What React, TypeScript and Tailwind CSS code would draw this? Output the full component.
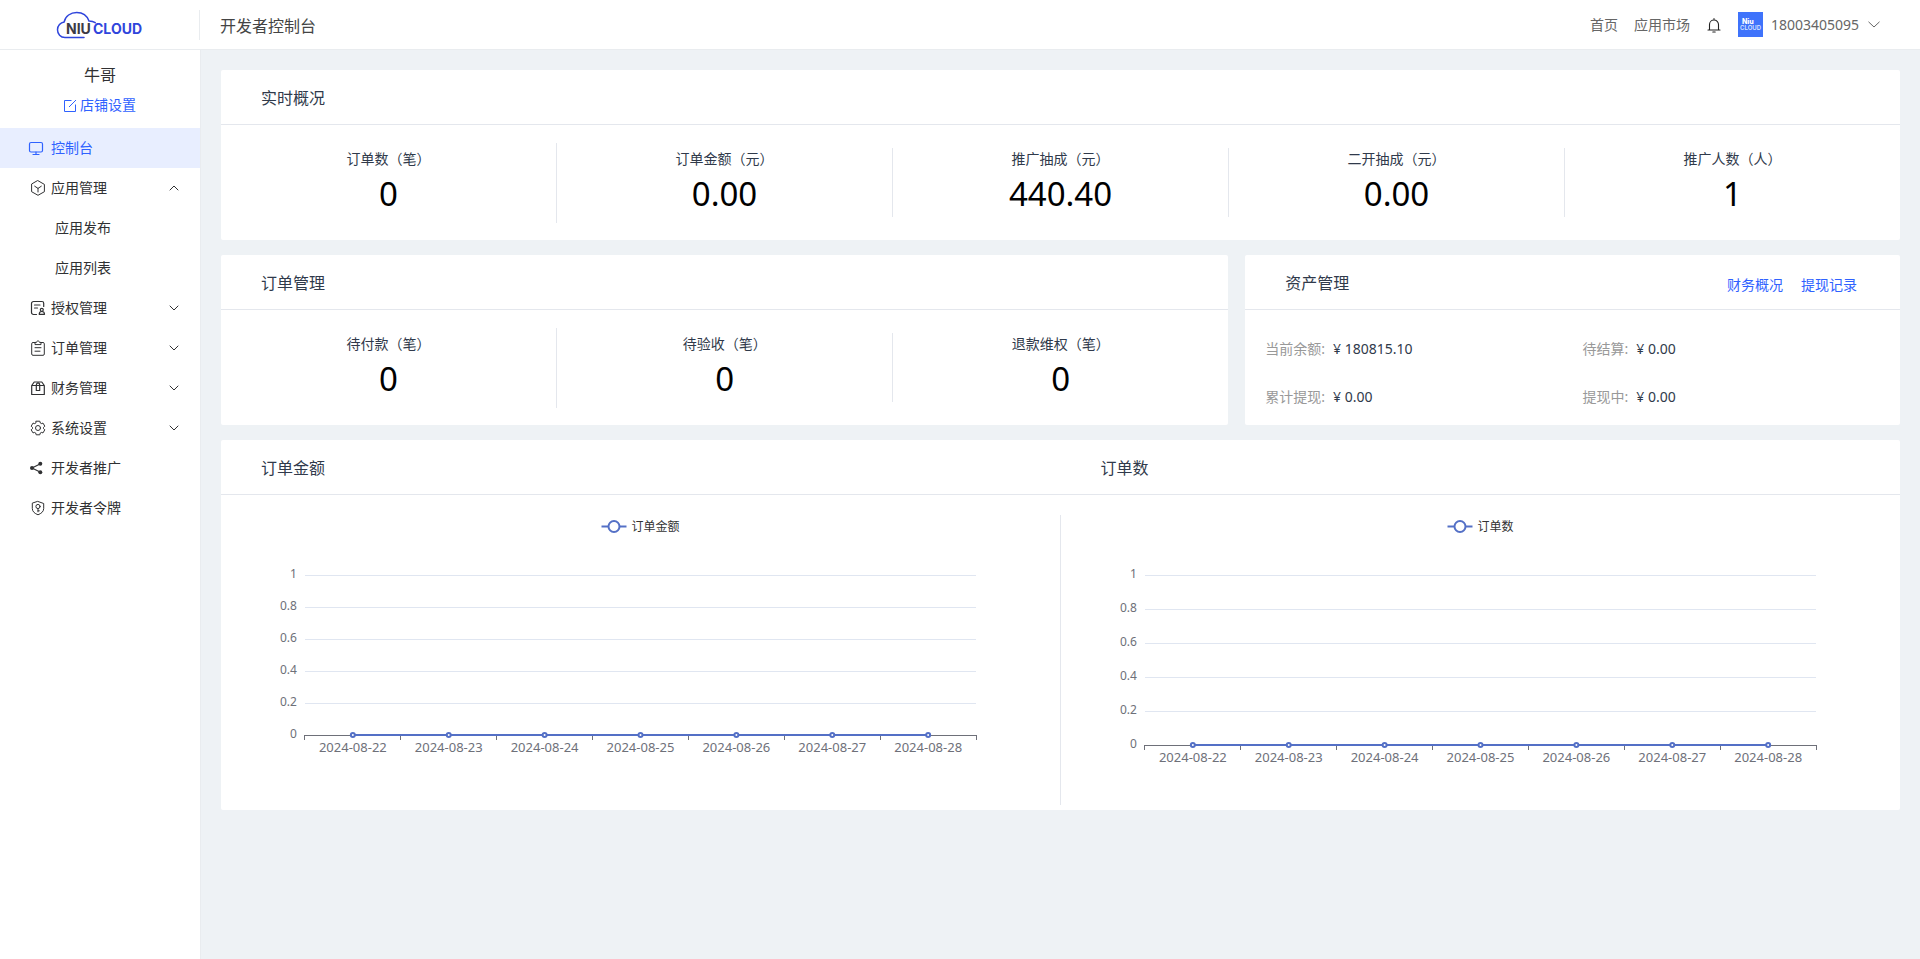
import { ReactNode, useState } from "react";
import { ChevronDown, ChevronUp } from "lucide-react";
import clsx from "clsx";

const BLUE = "#5470c6";
const days = ["2024-08-22", "2024-08-23", "2024-08-24", "2024-08-25", "2024-08-26", "2024-08-27", "2024-08-28"];
const yLabels = ["1", "0.8", "0.6", "0.4", "0.2", "0"];

function Icon({ children, className }: { children: ReactNode; className?: string }) {
  return (
    <svg viewBox="0 0 16 16" fill="none" stroke="currentColor" strokeWidth="1" strokeLinejoin="round" strokeLinecap="round" className={clsx("h-4 w-4 shrink-0", className)} aria-hidden="true">
      {children}
    </svg>
  );
}

const MonitorIcon = () => (
  <Icon>
    <rect x="1.5" y="2.5" width="13" height="9.5" rx="1.5" strokeWidth="1.2" />
    <path d="M8 12v2.300M5 14.500h6" strokeWidth="1.200" />
  </Icon>
);

const AppIcon = () => (
  <Icon>
    <path d="M8 .7l6.400 3.700v7.300L8 15.300l-6.400-3.600V4.400z" />
    <path d="M4.700 6.200L8 8.400l3.300-2.200M8 8.400v3.600" />
  </Icon>
);

const LicenseIcon = () => (
  <Icon>
    <path d="M6.500 14.500H3.500A2 2 0 0 1 1.500 12.500V3.500A2 2 0 0 1 3.500 1.500h8.500A1.700 1.700 0 0 1 13.700 3.200V6.500M4.500 5h5.500M4.500 8h3" strokeWidth="1.200" />
    <circle cx="11.800" cy="9.800" r="1.500" strokeWidth="1.200" />
    <path d="M9.200 14.300c0-2 1-2.800 2.600-2.800s2.700.8 2.700 2.800z" strokeWidth="1.200" />
  </Icon>
);

const OrderIcon = () => (
  <Icon>
    <path d="M5 2.500H3A1.300 1.300 0 0 0 1.700 3.800V14A1.300 1.300 0 0 0 3 15.300h10A1.300 1.300 0 0 0 14.300 14V3.800A1.300 1.300 0 0 0 13 2.500h-2" />
    <path d="M5 4.200V2.400h1.500C6.800.4 9.200.4 9.500 2.400H11v1.800zM5 7.700h6M5 11.200h5" />
  </Icon>
);

const FinanceIcon = () => (
  <Icon>
    <path d="M1.700 5.500L4.200 2h7.600l2.500 3.500v9H1.700zM1.700 5.500h12.600" strokeWidth="1.200" />
    <path d="M6.300 5.500v5h3.400v-5M6.300 5.500C6.300 2 9.700 2 9.700 5.500" strokeWidth="1.200" />
  </Icon>
);

const SettingIcon = () => (
  <Icon>
    <path d="M6.200 1.200H9.800L10.300 3L11.300 3.600L13 3.100L14.800 6.200L13.500 7.400V8.600L14.800 9.800L13 12.900L11.300 12.400L10.300 13L9.800 14.800H6.200L5.700 13L4.700 12.400L3 12.900L1.200 9.800L2.500 8.600V7.400L1.200 6.200L3 3.100L4.700 3.600L5.700 3z" />
    <circle cx="8" cy="8" r="2.500" />
  </Icon>
);

const ShareIcon = () => (
  <Icon>
    <path d="M10.500 3.700L2 8l8.500 4.200" strokeWidth="1.200" />
    <g fill="currentColor" stroke="none">
      <circle cx="2" cy="8" r="2" />
      <circle cx="10.300" cy="3.800" r="2" />
      <circle cx="10.300" cy="12.200" r="2" />
    </g>
  </Icon>
);

const TokenIcon = () => (
  <Icon>
    <path d="M8 1.500l5.700 2v5c0 3.200-2.500 5-5.700 6.300C4.800 13.500 2.300 11.700 2.300 8.500v-5z" />
    <circle cx="8" cy="6.500" r="2.100" />
    <path d="M8 8.700v3.100M8 10.800h1.300" />
  </Icon>
);

const menus = [
  { name: "控制台", icon: <MonitorIcon /> },
  { name: "应用管理", icon: <AppIcon />, children: ["应用发布", "应用列表"] },
  { name: "授权管理", icon: <LicenseIcon />, children: [] },
  { name: "订单管理", icon: <OrderIcon />, children: [] },
  { name: "财务管理", icon: <FinanceIcon />, children: [] },
  { name: "系统设置", icon: <SettingIcon />, children: [] },
  { name: "开发者推广", icon: <ShareIcon /> },
  { name: "开发者令牌", icon: <TokenIcon /> },
];

function Logo() {
  return (
    <svg width="88" height="28" viewBox="0 0 88 28" role="img" aria-label="NIUCLOUD">
      <path d="M28 26.500H9C4.500 26.500 1.500 23 1.500 18.700c0-4 3-7.200 6.700-7.800C9.200 5 14.700 1.500 20.700 1.500c6 0 10.500 3.500 12.300 8.500 2.500 0 4.700.6 6.200 1.700" fill="none" stroke="#2f45dc" strokeWidth="1.500" strokeLinecap="round" />
      <text x="10" y="23" fontFamily="Inter" fontWeight="700" fontSize="14" fill="#3c3a44">NIU</text>
      <text x="37" y="23" fontFamily="Inter" fontWeight="700" fontSize="14" fill="#2f45dc">CLOUD</text>
    </svg>
  );
}

function Header() {
  return (
    <header className="flex h-[50px] items-center border-b border-[#e9ecef] bg-white">
      <div className="flex h-[30px] w-[200px] shrink-0 items-center justify-center border-r border-[#e9ecef]">
        <Logo />
      </div>
      <h1 className="pt-0.5 pl-5 text-base text-[#444]">开发者控制台</h1>
      <div className="ml-auto flex items-center pr-10 text-sm text-[#666]">
        <a href="#" className="mr-4">首页</a>
        <a href="#" className="mr-4">应用市场</a>
        <button aria-label="消息" className="mr-4 text-[#222]">
          <Icon>
            <path d="M2 13h12M3.500 13V7.500a4.500 4.500 0 0 1 9 0V13M8 3V1.500M6.800 15h2.400" strokeWidth="1.100" />
          </Icon>
        </button>
        <button className="flex items-center">
          <svg width="25" height="25" viewBox="0 0 25 25" className="mr-2" aria-hidden="true">
            <rect width="25" height="25" fill="#3f73fb" />
            <text x="4" y="12" fontFamily="Inter" fontSize="7" fontWeight="800" fill="#fff">Niu</text>
            <text x="2" y="18" fontFamily="Inter" fontSize="6" fontWeight="600" fill="#dbe5ff">CLOUD</text>
          </svg>
          18003405095
          <svg width="12" height="7" viewBox="0 0 12 7" className="ml-[9px]" fill="none" stroke="#666" aria-hidden="true">
            <path d="M.5.8L6 6 11.500.8" />
          </svg>
        </button>
      </div>
    </header>
  );
}

function Sidebar() {
  const [active, setActive] = useState("控制台");
  const [opened, setOpened] = useState("应用管理");

  return (
    <aside className="w-[201px] shrink-0 border-r border-[#e9ecef] bg-white">
      <div className="flex h-[78px] flex-col items-center gap-1 pt-3 text-[#303133]">
        <p className="text-base leading-[26px]">牛哥</p>
        <a href="#" className="flex items-center gap-[3px] text-sm leading-[26px] text-[#2f62ff]">
          <svg width="13" height="13" viewBox="0 0 13 13" fill="none" stroke="currentColor" aria-hidden="true">
            <path d="M7.500 1.500h-7v11h11v-7M5 8l7-7" />
          </svg>
          店铺设置
        </a>
      </div>
      <nav className="text-sm text-[#303133]">
        {menus.map((menu) => (
          <div key={menu.name}>
            <button
              onClick={() => {
                if (menu.children) setOpened(opened === menu.name ? "" : menu.name);
                else setActive(menu.name);
              }}
              className={clsx("flex h-10 w-full items-center pr-[18px]", active === menu.name ? "bg-[#e8eeff] pl-7 text-[#2f62ff]" : "pl-[30px]")}
            >
              {menu.icon}
              <span className={active === menu.name ? "ml-[7px]" : "ml-[5px]"}>{menu.name}</span>
              {menu.children && (opened === menu.name
                ? <ChevronUp className="ml-auto h-4 w-4" strokeWidth={1.5} />
                : <ChevronDown className="ml-auto h-4 w-4" strokeWidth={1.5} />)}
            </button>
            {opened === menu.name && menu.children?.map((child) => (
              <a key={child} href="#" className="flex h-10 items-center pl-[55px]">{child}</a>
            ))}
          </div>
        ))}
      </nav>
    </aside>
  );
}

function Stats({ items }: { items: string[][] }) {
  return (
    <dl className="flex h-[115px] items-center">
      {items.map(([label, value], i) => (
        <div
          key={label}
          className={clsx("flex flex-1 flex-col items-center justify-center border-[#e4e7ed]", i === 0 ? "h-20" : "h-[69px]", i < items.length - 1 && "border-r")}
        >
          <dt className="text-sm leading-[22px]">{label}</dt>
          <dd className="text-[33px] leading-[48px] text-black">{value}</dd>
        </div>
      ))}
    </dl>
  );
}

function CardTitle({ children }: { children: ReactNode }) {
  return <h2 className="flex-1 pt-0.5 pl-10 text-base">{children}</h2>;
}

function LineChart({ name, height, legendWidth }: { name: string; height: number; legendWidth: number }) {
  const top = 60;
  const bottom = height - 60;
  const step = (bottom - top) / 5;
  // the plot area takes the middle 80% of the width
  const center = (i: number) => `${10 + (80 / 7) * (i + 0.5)}%`;

  return (
    <svg width="100%" height={height} className="block" fontSize="12" role="img" aria-label={name}>
      <svg x="50%" overflow="visible">
        <g transform={`translate(${-legendWidth / 2} 11.5)`}>
          <path d="M0 0h25" stroke={BLUE} strokeWidth="2" />
          <circle cx="12.500" cy="0" r="5.500" fill="#fff" stroke={BLUE} strokeWidth="2" />
          <text x="30" y="4" fill="#333">{name}</text>
        </g>
      </svg>
      {yLabels.map((label, i) => (
        <g key={label}>
          <line x1="10%" x2="90%" y1={top + step * i + 0.5} y2={top + step * i + 0.5} stroke={i === 5 ? "#6e7079" : "#e0e6f1"} shapeRendering="crispEdges" />
          <text x="10%" dx="-8" y={top + step * i + 3} textAnchor="end" fill="#6e7079">{label}</text>
        </g>
      ))}
      {[...days, ""].map((_, i) => (
        <line key={i} x1={`${10 + (80 / 7) * i}%`} x2={`${10 + (80 / 7) * i}%`} y1={bottom} y2={bottom + 5} stroke="#6e7079" shapeRendering="crispEdges" />
      ))}
      <line x1={center(0)} x2={center(6)} y1={bottom} y2={bottom} stroke={BLUE} strokeWidth="2" />
      {days.map((day, i) => (
        <g key={day}>
          <circle cx={center(i)} cy={bottom} r="2" fill="#fff" stroke={BLUE} strokeWidth="2" />
          <text x={center(i)} y={bottom + 17} fontSize="13" textAnchor="middle" fill="#6e7079">{day}</text>
        </g>
      ))}
    </svg>
  );
}

export default function App() {
  return (
    <div className="flex min-h-screen flex-col bg-[#eef2f5] font-['Noto_Sans','Noto_Sans_CJK_SC',sans-serif]">
      <Header />
      <div className="flex flex-1">
        <Sidebar />
        <main className="flex min-w-0 flex-1 flex-col gap-[15px] p-5 text-[#303a4b]">
          <section className="rounded-xs bg-white">
            <div className="flex h-[55px] items-center border-b border-[#e4e7ed]">
              <CardTitle>实时概况</CardTitle>
            </div>
            <Stats items={[["订单数（笔）", "0"], ["订单金额（元）", "0.00"], ["推广抽成（元）", "440.40"], ["二开抽成（元）", "0.00"], ["推广人数（人）", "1"]]} />
          </section>

          <div className="flex justify-between">
            <section className="w-3/5 rounded-xs bg-white">
              <div className="flex h-[55px] items-center border-b border-[#e4e7ed]">
                <CardTitle>订单管理</CardTitle>
              </div>
              <Stats items={[["待付款（笔）", "0"], ["待验收（笔）", "0"], ["退款维权（笔）", "0"]]} />
            </section>
            <section className="w-[39%] rounded-xs bg-white">
              <div className="flex h-[55px] items-center border-b border-[#e4e7ed] pr-[43px]">
                <CardTitle>资产管理</CardTitle>
                <div className="flex gap-[18px] pt-1.5 text-sm text-[#2f62ff]">
                  <a href="#">财务概况</a>
                  <a href="#">提现记录</a>
                </div>
              </div>
              <dl className="grid grid-cols-2 pt-[15px] pl-5 text-sm leading-[48px]">
                {[["当前余额", "180815.10"], ["待结算", "0.00"], ["累计提现", "0.00"], ["提现中", "0.00"]].map(([label, value]) => (
                  <div key={label} className="flex gap-2">
                    <dt className="text-[#999]">{label}:</dt>
                    <dd>¥ {value}</dd>
                  </div>
                ))}
              </dl>
            </section>
          </div>

          <section className="rounded-xs bg-white pb-[5px]">
            <div className="flex h-[55px] items-center border-b border-[#e4e7ed]">
              <CardTitle>订单金额</CardTitle>
              <CardTitle>订单数</CardTitle>
            </div>
            <div className="flex pt-5">
              <div className="min-w-0 flex-1 border-r border-[#e4e7ed]">
                <LineChart name="订单金额" height={280} legendWidth={78} />
              </div>
              <div className="min-w-0 flex-1">
                <LineChart name="订单数" height={290} legendWidth={66} />
              </div>
            </div>
          </section>
        </main>
      </div>
    </div>
  );
}
